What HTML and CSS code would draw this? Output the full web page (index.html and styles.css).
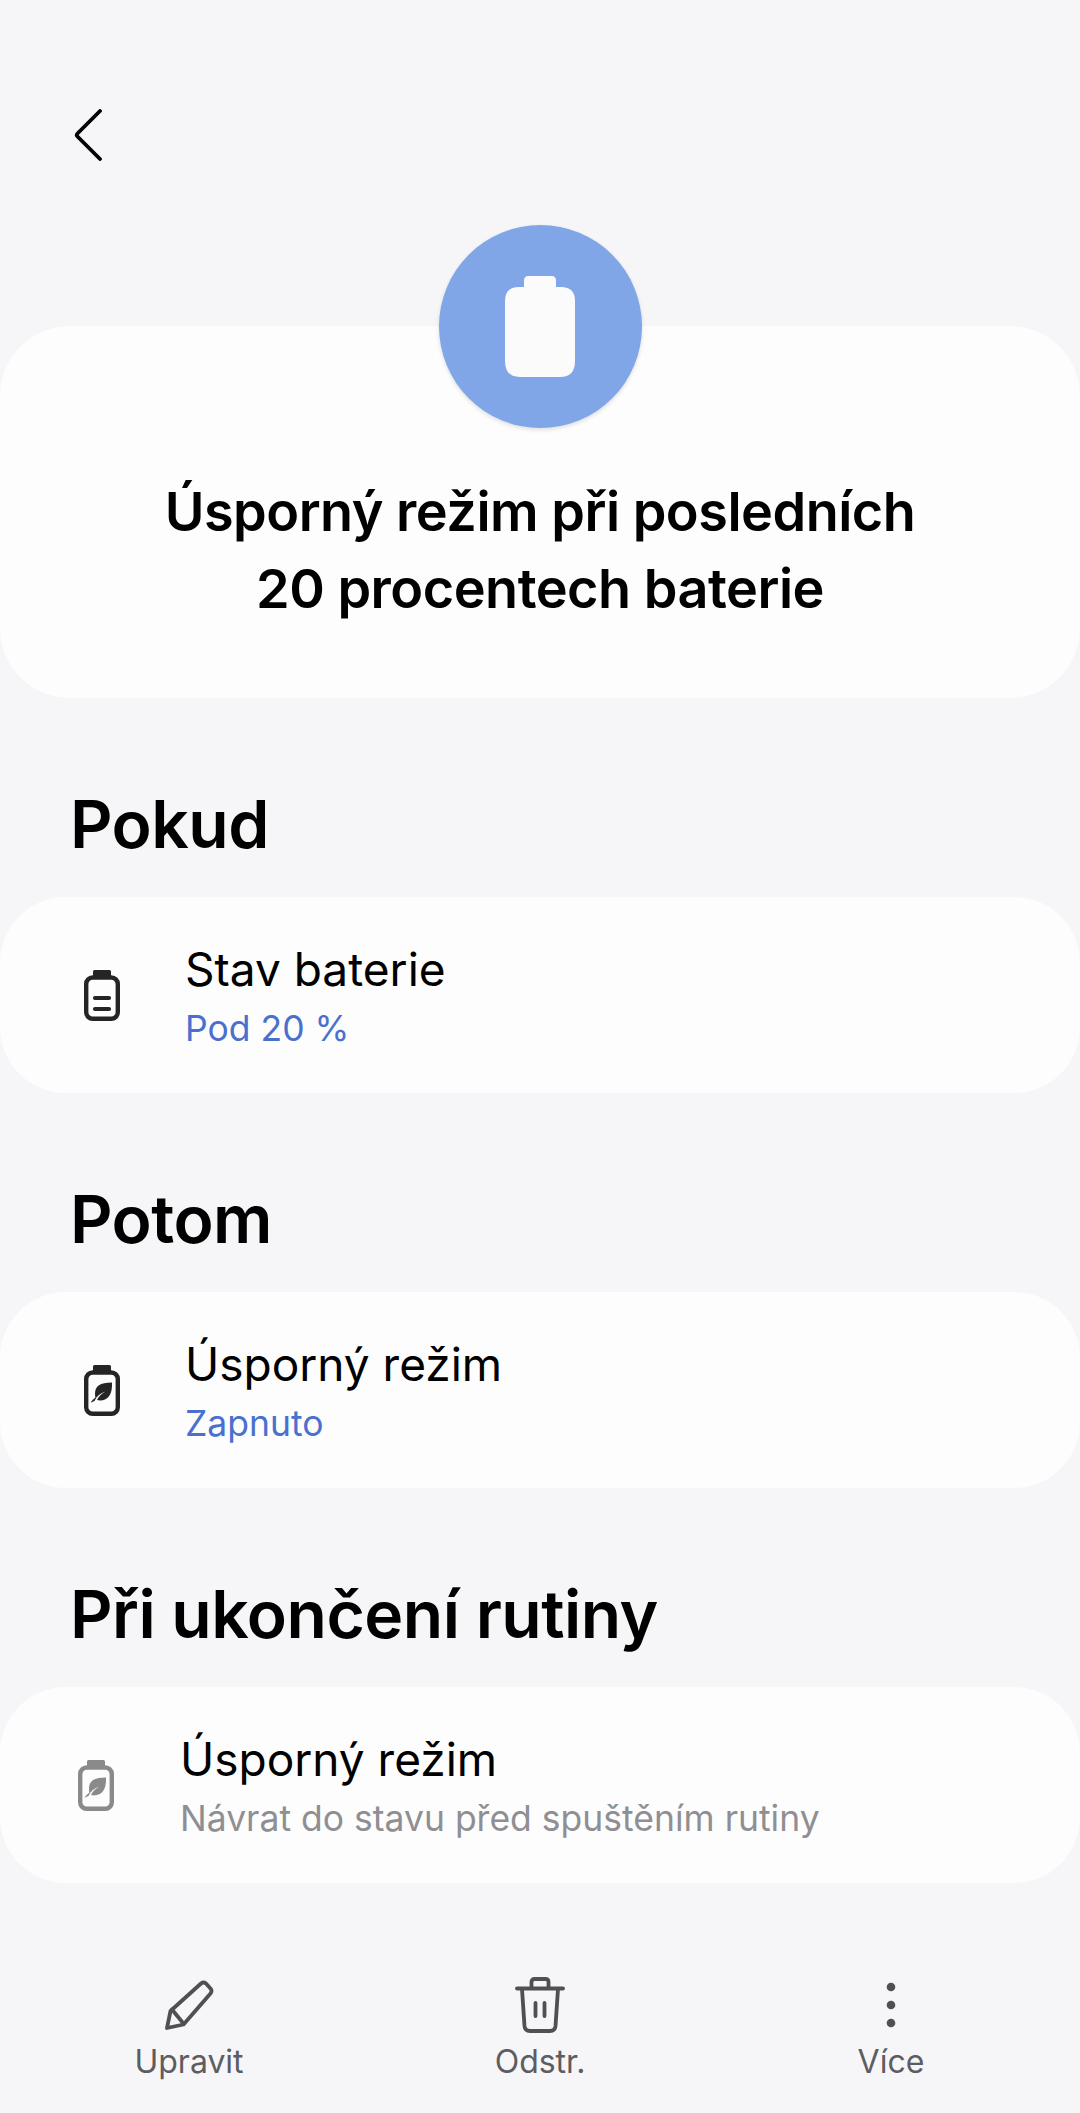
FILE: index.html
```html
<!DOCTYPE html>
<html lang="cs">
<head>
  <meta charset="UTF-8" />
  <meta name="viewport" content="width=device-width, initial-scale=1.0"/>
  <title>Úsporný režim</title>
  <link rel="stylesheet" href="styles.css">
</head>
<body>
  <header class="top-bar">
    <button class="back-btn">
      <svg width="28" height="52" viewBox="0 0 28 52"><path d="M26 2 L3.500 24.500 Q2 26 3.500 27.500 L26 50" fill="none" stroke="#000" stroke-width="3.800" stroke-linecap="round" stroke-linejoin="round"/></svg>
    </button>
  </header>

  <div class="hero-icon">
    <svg width="70" height="101" viewBox="0 0 70 101"><path d="M19 11V4.500Q19 0 23.500 0H46.500Q51 0 51 4.500V11H56Q70 11 70 25V85Q70 101 55 101H15Q0 101 0 85V25Q0 11 14 11Z" fill="#fbfbfb"/></svg>
  </div>
  <section class="hero-card">
    <h1>Úsporný režim při posledních<br>20 procentech baterie</h1>
  </section>

  <h2>Pokud</h2>
  <div class="row-card">
    <svg class="row-icon" width="36" height="52" viewBox="0 0 36 52">
      <path d="M10.500 2.500H25.500V8H10.500Z" fill="#252525" stroke="#252525" stroke-width="3" stroke-linejoin="round"/>
      <rect x="2.200" y="8.500" width="31.600" height="41.300" rx="6.500" fill="none" stroke="#252525" stroke-width="4.400"/>
      <path d="M11 29H25M11 40H25" stroke="#252525" stroke-width="4.200" stroke-linecap="round"/>
    </svg>
    <div class="row-text">
      <div class="row-title">Stav baterie</div>
      <div class="row-sub">Pod 20 %</div>
    </div>
  </div>

  <h2>Potom</h2>
  <div class="row-card">
    <svg class="row-icon" width="36" height="52" viewBox="0 0 36 52">
      <path d="M10.500 2.500H25.500V8H10.500Z" fill="#252525" stroke="#252525" stroke-width="3" stroke-linejoin="round"/>
      <rect x="2.200" y="8.500" width="31.600" height="41.300" rx="6.500" fill="none" stroke="#252525" stroke-width="4.400"/>
      <path d="M11 30C11 22 16 18.500 28 18.500C28.500 30 24.500 36.500 16 36.500C15 36.500 14 36.300 13 36C14.500 32.500 17.500 29.500 21.500 27.500C16.500 29 12.800 32 10.500 37L6.500 38.800C7.500 37 9.500 35 11.300 33.700Z" fill="#252525"/>
    </svg>
    <div class="row-text">
      <div class="row-title">Úsporný režim</div>
      <div class="row-sub">Zapnuto</div>
    </div>
  </div>

  <h2>Při ukončení rutiny</h2>
  <div class="row-card row-card-muted">
    <svg class="row-icon" width="36" height="52" viewBox="0 0 36 52">
      <path d="M10.500 2.500H25.500V8H10.500Z" fill="#8a8a8a" stroke="#8a8a8a" stroke-width="3" stroke-linejoin="round"/>
      <rect x="2.200" y="8.500" width="31.600" height="41.300" rx="6.500" fill="none" stroke="#8a8a8a" stroke-width="4.400"/>
      <path d="M11 30C11 22 16 18.500 28 18.500C28.500 30 24.500 36.500 16 36.500C15 36.500 14 36.300 13 36C14.500 32.500 17.500 29.500 21.500 27.500C16.500 29 12.800 32 10.500 37L6.500 38.800C7.500 37 9.500 35 11.300 33.700Z" fill="#8a8a8a"/>
    </svg>
    <div class="row-text">
      <div class="row-title">Úsporný režim</div>
      <div class="row-sub">Návrat do stavu před spuštěním rutiny</div>
    </div>
  </div>

  <nav class="bottom-bar">
    <div class="bar-item">
      <svg width="50" height="56" viewBox="0 0 50 56" fill="none" stroke="#4f4f54" stroke-width="3.800" stroke-linejoin="round" stroke-linecap="round">
        <path d="M3 51L6.500 34L37 6.500Q39.500 4.500 42 6.500L46.500 11.500Q48.500 14 46.500 16.500L19.500 47.500Z"/>
        <path d="M8 32.500L19 46"/>
      </svg>
      <span>Upravit</span>
    </div>
    <div class="bar-item">
      <svg width="50" height="56" viewBox="0 0 50 56" fill="none" stroke="#4f4f54" stroke-width="3.800" stroke-linejoin="round" stroke-linecap="round">
        <path d="M2 11.500H48"/>
        <path d="M7 12L9.500 49Q10 54 15 54H35Q40 54 40.500 49L43 12"/>
        <path d="M16.500 11V5Q16.500 2 19.500 2H30.500Q33.500 2 33.500 5V11"/>
        <path d="M20.500 26V39M29.500 26V39"/>
      </svg>
      <span>Odstr.</span>
    </div>
    <div class="bar-item">
      <svg width="50" height="56" viewBox="0 0 50 56" fill="#4f4f54">
        <circle cx="25" cy="10" r="4.300"/>
        <circle cx="25" cy="28" r="4.300"/>
        <circle cx="25" cy="46" r="4.300"/>
      </svg>
      <span>Více</span>
    </div>
  </nav>
</body>
</html>
```

FILE: styles.css
```css
:root {
  --page-bg: #f6f6f8;
  --card-bg: #fdfdfe;
  --accent: #4a70cf;
  --circle: #80a6e8;
  --bar-text: #5d5d61;
}

body {
  font-family: 'Inter', 'Roboto', sans-serif;
  background-color: var(--page-bg);
  margin: 0;
  color: #000;
  height: 2113px;
  overflow: hidden;
}

.top-bar {
  height: 225px;
  box-sizing: border-box;
  padding: 109px 0 0 74px;
}

.back-btn {
  display: block;
  background: none;
  border: none;
  padding: 0;
}

.back-btn svg {
  display: block;
}

.hero-icon {
  position: relative;
  z-index: 1;
  width: 203px;
  height: 203px;
  margin: 0 auto -102px;
  border-radius: 50%;
  background-color: var(--circle);
  box-shadow: 0 2px 4px rgba(0, 0, 0, 0.12);
  display: flex;
  align-items: center;
  justify-content: center;
}

.hero-card {
  background-color: var(--card-bg);
  border-radius: 70px;
  height: 372px;
  box-sizing: border-box;
  padding-top: 147px;
}

h1 {
  margin: 0;
  text-align: center;
  font-size: 54px;
  line-height: 77px;
  font-weight: 600;
  letter-spacing: -0.5px;
}

h2 {
  margin: 0;
  padding-left: 70px;
  height: 199px;
  box-sizing: border-box;
  padding-top: 91px;
  font-size: 66px;
  line-height: 70px;
  font-weight: 600;
  letter-spacing: -0.5px;
}

.row-card {
  background-color: var(--card-bg);
  border-radius: 66px;
  height: 196px;
  display: flex;
  align-items: center;
  padding-left: 84px;
  gap: 65px;
}

.row-card-muted {
  padding-left: 78px;
  gap: 66px;
}

.row-icon {
  flex: none;
}

.row-text {
  padding-top: 4px;
}

.row-title {
  font-size: 46px;
  line-height: 58px;
}

.row-sub {
  font-size: 35.500px;
  line-height: 50px;
  margin-top: 6px;
  color: var(--accent);
}

.row-card-muted .row-sub {
  color: #8f8f93;
}

.bottom-bar {
  margin-top: 94px;
  display: flex;
  padding: 0 13.500px;
}

.bar-item {
  flex: 1;
  display: flex;
  flex-direction: column;
  align-items: center;
  color: var(--bar-text);
  font-size: 32px;
  line-height: 40px;
}

.bar-item svg {
  margin-bottom: 9px;
}
```
